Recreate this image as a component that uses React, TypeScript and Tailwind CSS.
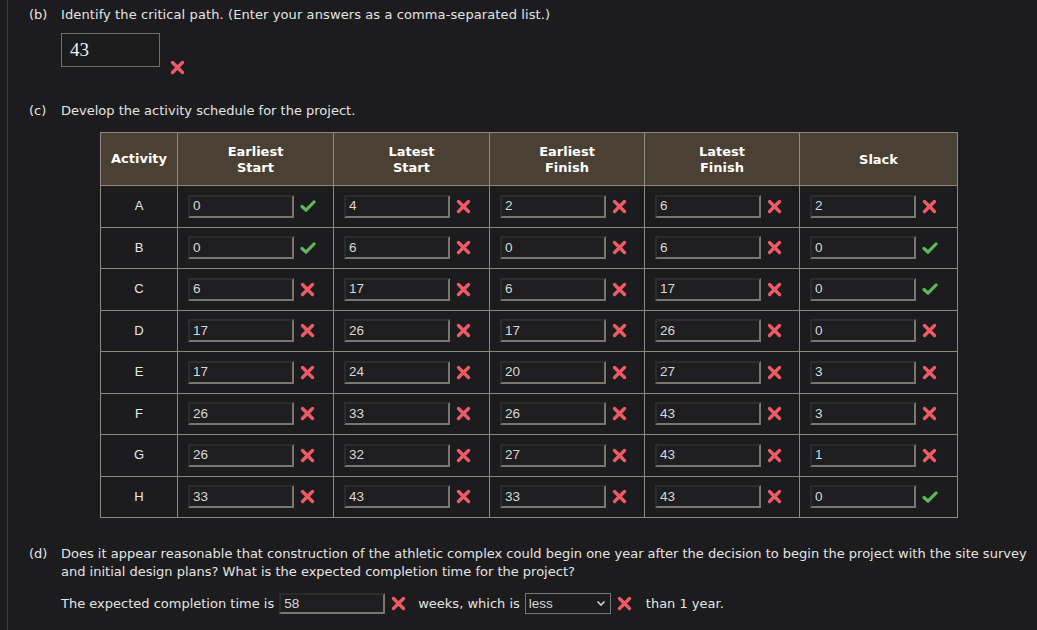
import React from 'react';

type Mark = 'ok' | 'bad';
type Cell = [string, Mark];

const rows: { id: string; cells: Cell[] }[] = [
  { id: 'A', cells: [['0', 'ok'], ['4', 'bad'], ['2', 'bad'], ['6', 'bad'], ['2', 'bad']] },
  { id: 'B', cells: [['0', 'ok'], ['6', 'bad'], ['0', 'bad'], ['6', 'bad'], ['0', 'ok']] },
  { id: 'C', cells: [['6', 'bad'], ['17', 'bad'], ['6', 'bad'], ['17', 'bad'], ['0', 'ok']] },
  { id: 'D', cells: [['17', 'bad'], ['26', 'bad'], ['17', 'bad'], ['26', 'bad'], ['0', 'bad']] },
  { id: 'E', cells: [['17', 'bad'], ['24', 'bad'], ['20', 'bad'], ['27', 'bad'], ['3', 'bad']] },
  { id: 'F', cells: [['26', 'bad'], ['33', 'bad'], ['26', 'bad'], ['43', 'bad'], ['3', 'bad']] },
  { id: 'G', cells: [['26', 'bad'], ['32', 'bad'], ['27', 'bad'], ['43', 'bad'], ['1', 'bad']] },
  { id: 'H', cells: [['33', 'bad'], ['43', 'bad'], ['33', 'bad'], ['43', 'bad'], ['0', 'ok']] },
];

const headers = [
  ['Earliest', 'Start'],
  ['Latest', 'Start'],
  ['Earliest', 'Finish'],
  ['Latest', 'Finish'],
  ['Slack'],
];

function Cross() {
  return (
    <svg width="15" height="15" viewBox="0 0 15 15" className="shrink-0">
      <path d="M2.5 2.5 L12.5 12.5 M12.5 2.5 L2.5 12.5" stroke="#ee5a65" strokeWidth="3.4" strokeLinecap="round" />
    </svg>
  );
}

function Check() {
  return (
    <svg width="16" height="14" viewBox="0 0 16 14" className="shrink-0">
      <path d="M2 7.5 L6 11.2 L14 3" stroke="#5fb85a" strokeWidth="3.2" fill="none" strokeLinecap="round" strokeLinejoin="round" />
    </svg>
  );
}

function Field({ value, mark }: { value: string; mark: Mark }) {
  return (
    <div className="flex items-center gap-[6px] pl-[10px]">
      <div className="flex h-[23px] w-[106px] items-center border-2 border-t-[#2c2c2c] border-l-[#2c2c2c] border-b-[#7b766d] border-r-[#7b766d] bg-[#1e1e20] pl-[3px] text-[13.5px] text-[#d8d8d8] [font-family:'Liberation_Sans',Arial,sans-serif]">
        {value}
      </div>
      {mark === 'ok' ? <Check /> : <Cross />}
    </div>
  );
}

export default function App() {
  return (
    <div className="min-h-[630px] bg-[#1c1c1e] pl-[7px] text-[13px] leading-[18px] text-[#e4e4e4] [font-family:'DejaVu_Sans',Verdana,sans-serif]">
      <div className="min-h-[630px] border-l border-[#3c3c3e] pl-[21px] pt-[6px]">
        <div className="flex">
          <span className="w-[32px]">(b)</span>
          <span className="tracking-[0.1px]">Identify the critical path. (Enter your answers as a comma-separated list.)</span>
        </div>
        <div className="ml-[32px] mt-[9px] flex items-end gap-[10px]">
          <div className="flex h-[34px] w-[99px] items-center border border-[#6f6f6f] bg-[#1c1c1c] pl-[8px] text-[19px] text-[#f0f0f0] [font-family:'Liberation_Serif','Times_New_Roman',serif]">
            43
          </div>
          <div className="mb-[-8px]">
            <Cross />
          </div>
        </div>

        <div className="mt-[35px] flex">
          <span className="w-[32px]">(c)</span>
          <span>Develop the activity schedule for the project.</span>
        </div>

        <table className="ml-[71px] mt-[12px] w-[857px] table-fixed border-collapse">
          <colgroup>
            <col className="w-[77px]" />
            <col className="w-[156px]" />
            <col className="w-[156px]" />
            <col className="w-[155px]" />
            <col className="w-[155px]" />
            <col className="w-[158px]" />
          </colgroup>
          <thead>
            <tr className="h-[53px] bg-[#4a4033]">
              <th className="border border-[#8e897e] text-center text-[13px] font-bold leading-[16px] text-white">Activity</th>
              {headers.map((h, i) => (
                <th key={i} className="border border-[#8e897e] pt-[1px] text-center text-[13px] font-bold leading-[16px] text-white">
                  {h.map((line) => (
                    <div key={line}>{line}</div>
                  ))}
                </th>
              ))}
            </tr>
          </thead>
          <tbody>
            {rows.map((r) => (
              <tr key={r.id} className="h-[41.5px]">
                <td className="border border-[#8e897e] text-center text-[13px] text-[#e8e8e8] [font-family:'Liberation_Sans',Arial,sans-serif]">
                  {r.id}
                </td>
                {r.cells.map(([v, m], i) => (
                  <td key={i} className="border border-[#8e897e]">
                    <Field value={v} mark={m} />
                  </td>
                ))}
              </tr>
            ))}
          </tbody>
        </table>

        <div className="mt-[27px] flex">
          <span className="w-[32px] shrink-0">(d)</span>
          <div>
            <p>
              Does it appear reasonable that construction of the athletic complex could begin one year after the decision to begin the project with the site survey and initial design plans? What is the expected completion time for the project?
            </p>
            <div className="mt-[12px] flex items-center">
              <span>The expected completion time is</span>
              <div className="ml-[5px] flex h-[21px] w-[106px] items-center border-2 border-t-[#2c2c2c] border-l-[#2c2c2c] border-b-[#7b766d] border-r-[#7b766d] bg-[#1e1e20] pl-[3px] text-[13.5px] text-[#d8d8d8] [font-family:'Liberation_Sans',Arial,sans-serif]">
                58
              </div>
              <span className="ml-[6px]">
                <Cross />
              </span>
              <span className="ml-[12px]">weeks, which is</span>
              <div className="ml-[5px] flex h-[21px] w-[86px] items-center justify-between border border-[#777] bg-[#1c1c1e] pl-[3px] pr-[4px] text-[13.5px] text-[#d8d8d8] [font-family:'Liberation_Sans',Arial,sans-serif]">
                <span>less</span>
                <svg width="10" height="7" viewBox="0 0 10 7">
                  <path d="M1.5 1.5 L5 5 L8.5 1.5" stroke="#d0d0d0" strokeWidth="1.6" fill="none" />
                </svg>
              </div>
              <span className="ml-[6px]">
                <Cross />
              </span>
              <span className="ml-[14px]">than 1 year.</span>
            </div>
          </div>
        </div>
      </div>
    </div>
  );
}
